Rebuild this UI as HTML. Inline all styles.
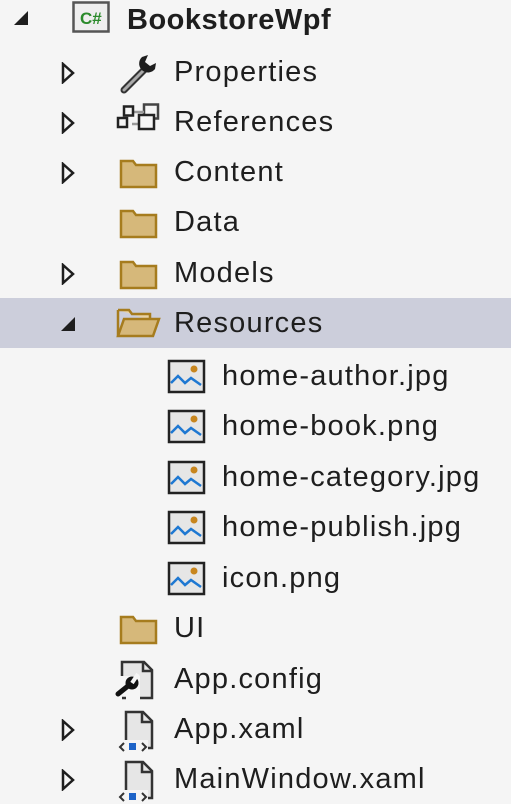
<!DOCTYPE html><html><head><style>
body{margin:0;width:511px;height:804px;background:#f5f5f5;font-family:"Liberation Sans",sans-serif;color:#1e1e1e;overflow:hidden;position:relative}
.r{position:absolute;left:0;width:511px;height:50px}
.t{position:absolute;font-size:29px;letter-spacing:1.2px;line-height:50px;top:0px;white-space:nowrap}
svg{position:absolute}
.sel{background:#cccedb}
</style></head><body>
<div class="r" style="top:-5px">
<svg style="left:13px;top:15px" width="16" height="16"><polygon points="15,1 15,15 1,15" fill="#1e1e1e"/></svg>
<svg style="left:72px;top:6px" width="38" height="32"><rect x="1.5" y="1.5" width="35" height="29" fill="#eee" stroke="#555" stroke-width="2.5"/><text x="8" y="23" font-size="17" font-family="Liberation Sans" fill="#2a8a2a" font-weight="bold">C#</text></svg>
<div class="t" style="left:127px;font-weight:bold;letter-spacing:0.5px">BookstoreWpf</div></div>

<div class="r" style="top:47px">
<svg style="left:61px;top:15px" width="14" height="22"><polygon points="2,2 12,11 2,20" fill="none" stroke="#1e1e1e" stroke-width="2.5"/></svg>
<svg style="left:116px;top:4px" width="46" height="44"><path d="M8,39 L30,17" stroke="#333" stroke-width="7" stroke-linecap="round"/><path d="M8,39 L30,17" stroke="#aaa" stroke-width="3" stroke-linecap="round"/><path d="M27,20 A9,9 0 0 1 26,6 L32,4 L29,11 L34,15 L40,12 L39,18 A9,9 0 0 1 27,20 Z" fill="#1e1e1e"/></svg>
<div class="t" style="left:174px">Properties</div></div>

<div class="r" style="top:97px">
<svg style="left:61px;top:15px" width="14" height="22"><polygon points="2,2 12,11 2,20" fill="none" stroke="#1e1e1e" stroke-width="2.5"/></svg>
<svg style="left:114px;top:6px" width="48" height="30"><g fill="none" stroke-width="2.5"><rect x="30" y="1.5" width="14" height="14" stroke="#444"/><path d="M18,9 H30 M18,21 H26" stroke="#999"/><rect x="4" y="15" width="9" height="9" stroke="#222"/><rect x="10" y="3.5" width="9" height="9" stroke="#222"/><rect x="25" y="12" width="15" height="14" stroke="#222" fill="#f5f5f5"/></g></svg>
<div class="t" style="left:174px">References</div></div>

<div class="r" style="top:147px">
<svg style="left:61px;top:15px" width="14" height="22"><polygon points="2,2 12,11 2,20" fill="none" stroke="#1e1e1e" stroke-width="2.5"/></svg>
<svg style="left:119px;top:10px" width="40" height="32"><path d="M2,4 H14 L17,8 H37 V30 H2 Z" fill="#d6b87a" stroke="#a67c1e" stroke-width="2.5"/></svg>
<div class="t" style="left:174px">Content</div></div>

<div class="r" style="top:197px">
<svg style="left:119px;top:10px" width="40" height="32"><path d="M2,4 H14 L17,8 H37 V30 H2 Z" fill="#d6b87a" stroke="#a67c1e" stroke-width="2.5"/></svg>
<div class="t" style="left:174px">Data</div></div>

<div class="r" style="top:248px">
<svg style="left:61px;top:15px" width="14" height="22"><polygon points="2,2 12,11 2,20" fill="none" stroke="#1e1e1e" stroke-width="2.5"/></svg>
<svg style="left:119px;top:10px" width="40" height="32"><path d="M2,4 H14 L17,8 H37 V30 H2 Z" fill="#d6b87a" stroke="#a67c1e" stroke-width="2.5"/></svg>
<div class="t" style="left:174px">Models</div></div>

<div class="r sel" style="top:298px">
<svg style="left:60px;top:18px" width="16" height="16"><polygon points="15,1 15,15 1,15" fill="#1e1e1e"/></svg>
<svg style="left:116px;top:8px" width="46" height="34"><path d="M2,4 H13 L16,8 H34 V14" fill="#e8d3a6" stroke="#a67c1e" stroke-width="2.5"/><path d="M2,30 L8,13 H43 L37,30 Z" fill="#d6b87a" stroke="#a67c1e" stroke-width="2.5"/><path d="M2,4 V30" stroke="#a67c1e" stroke-width="2.5"/></svg>
<div class="t" style="left:174px">Resources</div></div>

<div class="r" style="top:351px"><svg style="left:167px;top:8px" width="40" height="36"><rect x="2" y="2" width="35" height="31" fill="#e6e6e6" stroke="#222" stroke-width="2.5"/><circle cx="27" cy="10" r="3.5" fill="#c8861e"/><path d="M4,24 L11,17 L18,24 L24,19 L34,26" fill="none" stroke="#1e78d2" stroke-width="2.5"/></svg><div class="t" style="left:222px">home-author.jpg</div></div>
<div class="r" style="top:401px"><svg style="left:167px;top:8px" width="40" height="36"><rect x="2" y="2" width="35" height="31" fill="#e6e6e6" stroke="#222" stroke-width="2.5"/><circle cx="27" cy="10" r="3.5" fill="#c8861e"/><path d="M4,24 L11,17 L18,24 L24,19 L34,26" fill="none" stroke="#1e78d2" stroke-width="2.5"/></svg><div class="t" style="left:222px">home-book.png</div></div>
<div class="r" style="top:452px"><svg style="left:167px;top:8px" width="40" height="36"><rect x="2" y="2" width="35" height="31" fill="#e6e6e6" stroke="#222" stroke-width="2.5"/><circle cx="27" cy="10" r="3.5" fill="#c8861e"/><path d="M4,24 L11,17 L18,24 L24,19 L34,26" fill="none" stroke="#1e78d2" stroke-width="2.5"/></svg><div class="t" style="left:222px">home-category.jpg</div></div>
<div class="r" style="top:502px"><svg style="left:167px;top:8px" width="40" height="36"><rect x="2" y="2" width="35" height="31" fill="#e6e6e6" stroke="#222" stroke-width="2.5"/><circle cx="27" cy="10" r="3.5" fill="#c8861e"/><path d="M4,24 L11,17 L18,24 L24,19 L34,26" fill="none" stroke="#1e78d2" stroke-width="2.5"/></svg><div class="t" style="left:222px">home-publish.jpg</div></div>
<div class="r" style="top:553px"><svg style="left:167px;top:8px" width="40" height="36"><rect x="2" y="2" width="35" height="31" fill="#e6e6e6" stroke="#222" stroke-width="2.5"/><circle cx="27" cy="10" r="3.5" fill="#c8861e"/><path d="M4,24 L11,17 L18,24 L24,19 L34,26" fill="none" stroke="#1e78d2" stroke-width="2.5"/></svg><div class="t" style="left:222px">icon.png</div></div>

<div class="r" style="top:603px">
<svg style="left:119px;top:10px" width="40" height="32"><path d="M2,4 H14 L17,8 H37 V30 H2 Z" fill="#d6b87a" stroke="#a67c1e" stroke-width="2.5"/></svg>
<div class="t" style="left:174px">UI</div></div>

<div class="r" style="top:654px">
<svg style="left:114px;top:6px" width="44" height="42"><path d="M8,2 H30 L38,10 V38 H8 Z" fill="#e6e6e6" stroke="#333" stroke-width="2.5"/><path d="M29,2 V11 H38" fill="none" stroke="#333" stroke-width="2.5"/><rect x="0" y="16" width="26" height="26" fill="#f5f5f5"/><path d="M8,38 H12" stroke="#333" stroke-width="2.5"/><path d="M4,34 L14,26" stroke="#111" stroke-width="5" stroke-linecap="round"/><circle cx="18" cy="23" r="6.5" fill="#111"/><path d="M18,23 L24,14" stroke="#f5f5f5" stroke-width="4"/></svg>
<div class="t" style="left:174px">App.config</div></div>

<div class="r" style="top:704px">
<svg style="left:61px;top:15px" width="14" height="22"><polygon points="2,2 12,11 2,20" fill="none" stroke="#1e1e1e" stroke-width="2.5"/></svg>
<svg style="left:114px;top:6px" width="44" height="44"><path d="M12,2 H29 L38,11 V38 H12 Z" fill="#e6e6e6" stroke="#333" stroke-width="2.5"/><path d="M28,2 V12 H38" fill="none" stroke="#333" stroke-width="2.5"/><rect x="4" y="30" width="30" height="14" fill="#f5f5f5"/><path d="M10,33 L6,37 L10,41 M28,33 L32,37 L28,41" fill="none" stroke="#333" stroke-width="2"/><rect x="15" y="33" width="7" height="7" fill="#1e64c8"/></svg>
<div class="t" style="left:174px">App.xaml</div></div>

<div class="r" style="top:754px">
<svg style="left:61px;top:15px" width="14" height="22"><polygon points="2,2 12,11 2,20" fill="none" stroke="#1e1e1e" stroke-width="2.5"/></svg>
<svg style="left:114px;top:6px" width="44" height="44"><path d="M12,2 H29 L38,11 V38 H12 Z" fill="#e6e6e6" stroke="#333" stroke-width="2.5"/><path d="M28,2 V12 H38" fill="none" stroke="#333" stroke-width="2.5"/><rect x="4" y="30" width="30" height="14" fill="#f5f5f5"/><path d="M10,33 L6,37 L10,41 M28,33 L32,37 L28,41" fill="none" stroke="#333" stroke-width="2"/><rect x="15" y="33" width="7" height="7" fill="#1e64c8"/></svg>
<div class="t" style="left:174px">MainWindow.xaml</div></div>
</body></html>
